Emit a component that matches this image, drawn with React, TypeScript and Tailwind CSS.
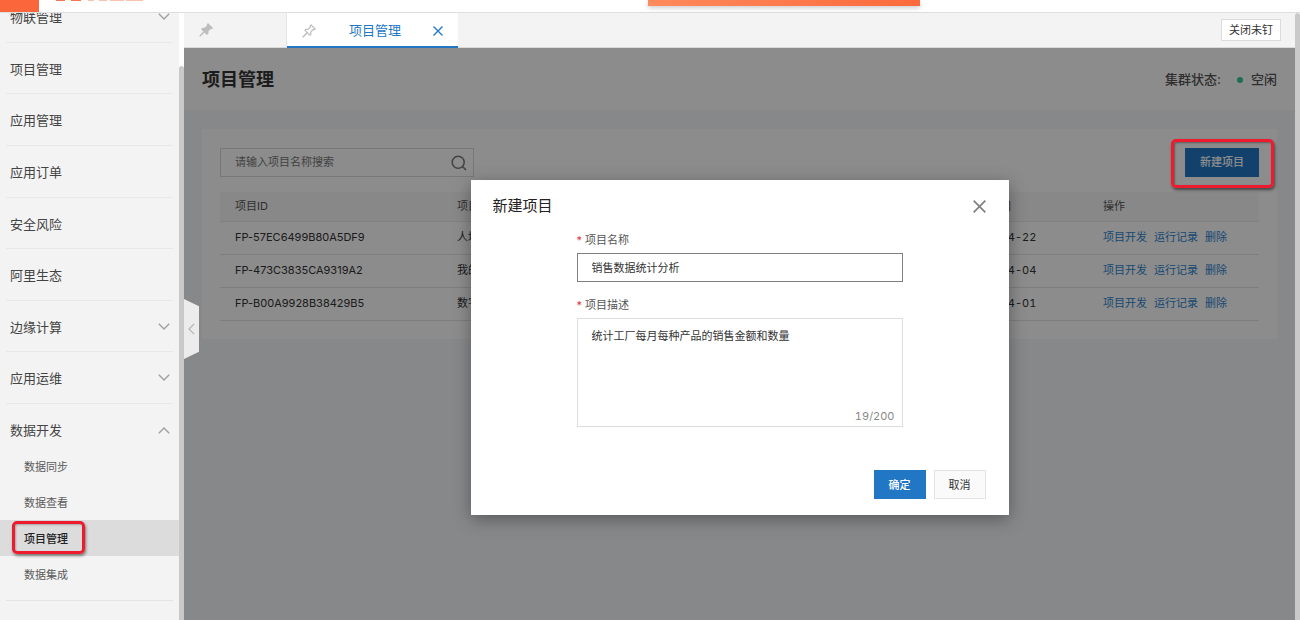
import { useState } from 'react';

type NavItem = { label: string; expandable?: boolean };

const navItems: NavItem[] = [
  { label: '物联管理', expandable: true },
  { label: '项目管理' },
  { label: '应用管理' },
  { label: '应用订单' },
  { label: '安全风险' },
  { label: '阿里生态' },
  { label: '边缘计算', expandable: true },
  { label: '应用运维', expandable: true },
];

const subItems = ['数据同步', '数据查看', '项目管理', '数据集成'];

const projects = [
  { id: 'FP-57EC6499B80A5DF9', name: '人均产值', date: '2021-04-22' },
  { id: 'FP-473C3835CA9319A2', name: '我的项目', date: '2021-04-04' },
  { id: 'FP-B00A9928B38429B5', name: '数字工厂', date: '2021-04-01' },
];

function Chevron({ up = false }: { up?: boolean }) {
  return (
    <svg width="12" height="7" viewBox="0 0 12 7" fill="none" stroke="#a0a0a0" strokeWidth="1.4" aria-hidden="true">
      <path d={up ? 'M0.8 6.2 6 1l5.2 5.2' : 'M0.8 0.8 6 6l5.2-5.2'} />
    </svg>
  );
}

function Cross({ size, className }: { size: number; className: string }) {
  return (
    <svg width={size} height={size} viewBox="0 0 12 12" fill="none" stroke="currentColor" strokeWidth="1.6" className={className} aria-hidden="true">
      <path d="M0.6 0.6 11.4 11.4M11.4 0.6 0.6 11.4" />
    </svg>
  );
}

function Pin({ filled = false }: { filled?: boolean }) {
  return (
    <svg width="14" height="14" viewBox="0 0 14 14" fill={filled ? '#bdbdbd' : 'none'} stroke="#bdbdbd" strokeWidth="1.2" strokeLinejoin="round" aria-hidden="true">
      <path d="M9 0.8 13.2 5 12 5.8 11.2 5.5 8.9 7.9 8.8 10.6 7.8 11.2 2.9 6.3 3.6 5.3 6.2 5.1 8.5 2.8 8.2 2Z" />
      <path d="M5.2 8.8 0.7 13.3" strokeWidth="1.5" />
    </svg>
  );
}

function Header() {
  return (
    <header className="flex h-[13px] shrink-0 items-start border-b border-[#dedede] bg-white">
      <div className="h-3 w-[39px] bg-[#fb673b]" />
      <svg width="90" height="2" viewBox="0 0 90 2" className="ml-4" aria-hidden="true">
        <path d="M1 0h9v1h-9zM16 0h10v1h-10z" fill="#f97650" />
        <path d="M33 0h6v1h-6zM44 0h8v1h-8zM55 0h14v1h-14zM71 0h17v1h-17z" fill="#f9c3ae" />
      </svg>
      <div className="mr-[380px] ml-auto h-[6px] w-[272px] bg-linear-to-r from-[#ff8a5c] to-[#fb6a3c] shadow-[0_2px_5px_rgba(0,0,0,0.2)]" />
    </header>
  );
}

function Sidebar() {
  return (
    <aside className="flex w-[184px] shrink-0 overflow-hidden bg-[#f3f3f3]">
      <nav className="min-w-0 flex-1">
        <ul className="-mt-[22px] grid h-[413px] auto-rows-fr">
          {navItems.map((item) => (
            <li key={item.label} className="mx-[6px] border-b border-[#e8e8e8]">
              <a href="#" className="flex justify-between pt-4 pr-[3px] pl-1 text-[13px] leading-5 text-[#444]">
                {item.label}
                {item.expandable && (
                  <span className="pt-[6px]">
                    <Chevron />
                  </span>
                )}
              </a>
            </li>
          ))}
        </ul>
        <button type="button" className="flex h-11 w-full justify-between pt-4 pr-[9px] pl-[10px] text-[13px] leading-5 text-[#444]">
          数据开发
          <span className="pt-[7px]">
            <Chevron up />
          </span>
        </button>
        <ul>
          {subItems.map((label) =>
            label === '项目管理' ? (
              <li key={label} className="relative bg-[#dcdcdc]">
                <a href="#" className="flex h-9 items-center pt-[3px] pl-6 text-[11px] font-medium text-[#222]">
                  {label}
                </a>
                <span className="pointer-events-none absolute top-px left-3 h-[33px] w-[73px] rounded-[5px] border-3 border-[#ee1b2e] shadow-[1px_2px_3px_rgba(0,0,0,0.45),inset_1px_1px_2px_rgba(0,0,0,0.25)]" />
              </li>
            ) : (
              <li key={label}>
                <a href="#" className="flex h-9 items-center pt-[3px] pl-6 text-[11px] text-[#5a5a5a]">
                  {label}
                </a>
              </li>
            ),
          )}
        </ul>
        <div className="mx-[6px] mt-2 border-t border-[#e4e4e4]" />
      </nav>
      <div className="w-[5px] bg-white pt-[53px]">
        <div className="h-full rounded-t-sm bg-[#c9c9c9]" />
      </div>
    </aside>
  );
}

function TabBar() {
  return (
    <div className="flex h-[35px] shrink-0 border-b border-[#d8dad8] bg-[#f3f3f3]">
      <div className="flex w-[103px] items-center border-r border-[#e6e6e6] pl-[15px]">
        <Pin filled />
      </div>
      <div className="-mb-px flex w-[171px] items-center border-b-2 border-[#2277c5] bg-white pt-[2px] pr-[15px] pl-[15px] text-[13px] text-[#2277c5]">
        <Pin />
        <a href="#" className="ml-auto">
          项目管理
        </a>
        <button type="button" aria-label="关闭标签" className="ml-8">
          <Cross size={10} className="text-[#2277c5]" />
        </button>
      </div>
      <button type="button" className="mt-[6px] mr-[14px] ml-auto h-[22px] border border-[#dcdcdc] bg-white px-[7px] text-[11px] text-[#333]">
        关闭未钉
      </button>
    </div>
  );
}

function ProjectTable() {
  return (
    <table className="mt-[15px] w-full table-fixed text-left text-[11px] text-[#333]">
      <colgroup>
        <col className="w-[222px]" />
        <col />
        <col className="w-[136px]" />
        <col className="w-[171px]" />
      </colgroup>
      <thead>
        <tr className="h-[29px] border-b border-[#e9e9e9] bg-[#f8f8f8] text-[#555]">
          <th className="pl-[15px] font-normal">项目ID</th>
          <th className="pl-[15px] font-normal">项目名称</th>
          <th className="pl-[15px] font-normal">创建时间</th>
          <th className="pl-[15px] font-normal">操作</th>
        </tr>
      </thead>
      <tbody>
        {projects.map((p) => (
          <tr key={p.id} className="h-[33px] border-b border-[#e6e6e6]">
            <td className="pl-[15px]">{p.id}</td>
            <td className="pl-[15px]">{p.name}</td>
            <td className="pl-[13px] tabular-nums">{p.date}</td>
            <td className="pl-[15px]">
              <div className="flex gap-[7px] whitespace-nowrap text-[#2e86cf]">
                <a href="#">项目开发</a>
                <a href="#">运行记录</a>
                <a href="#">删除</a>
              </div>
            </td>
          </tr>
        ))}
      </tbody>
    </table>
  );
}

function ProjectPage() {
  return (
    <div className="h-full bg-[#f5f7fa]">
      <div className="flex h-[62px] items-center justify-between bg-white px-[18px] pt-[2px]">
        <h1 className="text-lg font-bold text-[#333]">项目管理</h1>
        <div className="flex items-center text-[13px] text-[#555]">
          <span className="font-medium">集群状态:</span>
          <span className="mr-2 ml-4 size-[6px] rounded-full bg-[#35c88d]" />
          <span className="font-medium">空闲</span>
        </div>
      </div>
      <section className="mx-[18px] mt-[19px] bg-white p-[18px] pt-[19px]">
        <div className="flex items-start justify-between">
          <label className="flex h-[29px] w-[254px] items-center border border-[#dadada] pr-[6px] pl-[14px]">
            <input
              aria-label="搜索项目"
              placeholder="请输入项目名称搜索"
              className="min-w-0 flex-1 bg-transparent text-[11px] outline-none placeholder:text-[#777]"
            />
            <svg width="16" height="16" viewBox="0 0 16 16" fill="none" stroke="#7a7a7a" strokeWidth="1.5" aria-hidden="true">
              <circle cx="7.2" cy="7.2" r="6" />
              <path d="M11.4 11.4 15 15" />
            </svg>
          </label>
          <div className="relative">
            <button type="button" className="h-[29px] w-[74px] bg-[#2277c5] text-[11px] font-medium text-white">
              新建项目
            </button>
            <span className="pointer-events-none absolute -top-[9px] -right-[15px] -bottom-[11px] -left-[14px] z-20 rounded-[5px] border-3 border-[#ee1b2e] shadow-[1px_2px_3px_rgba(0,0,0,0.5),inset_1px_1px_2px_rgba(0,0,0,0.35)]" />
          </div>
        </div>
        <ProjectTable />
      </section>
    </div>
  );
}

function CreateDialog() {
  const [name, setName] = useState('销售数据统计分析');
  const [desc, setDesc] = useState('统计工厂每月每种产品的销售金额和数量');
  return (
    <div className="absolute inset-0 z-10 flex items-start justify-center bg-black/45 pt-[132px]">
      <div role="dialog" aria-labelledby="dialog-title" className="w-[538px] bg-white pt-[14px] pb-4 shadow-[0_4px_16px_rgba(0,0,0,0.35)]">
        <div className="flex h-6 items-center justify-between pr-[23px] pl-[22px]">
          <h2 id="dialog-title" className="text-[15px] text-[#222]">
            新建项目
          </h2>
          <button type="button" aria-label="关闭">
            <Cross size={13} className="text-[#808080]" />
          </button>
        </div>
        <form className="mt-3 px-[106px] text-[11px] text-[#333]">
          <label htmlFor="name" className="mb-[3px] block leading-5 text-[#555]">
            <span className="mr-[3px] text-[#d9363e]">*</span>
            项目名称
          </label>
          <input
            id="name"
            value={name}
            onChange={(e) => setName(e.target.value)}
            className="block h-[29px] w-full border border-[#808080] px-[14px] pb-[2px] outline-none"
          />
          <label htmlFor="desc" className="mt-[13px] mb-[3px] block leading-5 text-[#555]">
            <span className="mr-[3px] text-[#d9363e]">*</span>
            项目描述
          </label>
          <div className="flex h-[109px] flex-col border border-[#dcdcdc]">
            <textarea
              id="desc"
              value={desc}
              onChange={(e) => setDesc(e.target.value)}
              className="block w-full flex-1 resize-none px-[14px] pt-2 leading-[18px] outline-none"
            />
            <span className="pr-[7px] text-right leading-5 text-[#888] tabular-nums">19/200</span>
          </div>
        </form>
        <div className="mt-[43px] flex justify-end gap-2 pr-[23px] text-[11px]">
          <button type="button" className="h-[29px] w-[52px] bg-[#2277c5] pt-px font-medium text-white">
            确定
          </button>
          <button type="button" className="h-[29px] w-[52px] border border-[#e3e3e3] bg-[#fafafa] pt-px text-[#333]">
            取消
          </button>
        </div>
      </div>
    </div>
  );
}

export default function App() {
  return (
    <div className="flex h-screen flex-col overflow-hidden font-['Inter','Noto_Sans_CJK_SC',sans-serif]">
      <Header />
      <div className="flex min-h-0 flex-1">
        <Sidebar />
        <main className="flex min-w-0 flex-1 flex-col">
          <TabBar />
          <div className="relative min-h-0 flex-1">
            <ProjectPage />
            <CreateDialog />
            <button
              type="button"
              aria-label="收起菜单"
              className="absolute top-[251px] left-0 z-20 flex h-[60px] w-[15px] items-center justify-center bg-[#ececec] [clip-path:polygon(0_0,100%_12%,100%_88%,0_100%)]"
            >
              <svg width="7" height="12" viewBox="0 0 7 12" fill="none" stroke="#b5b5b5" strokeWidth="1.2" aria-hidden="true">
                <path d="M6.2 0.8 1 6l5.2 5.2" />
              </svg>
            </button>
          </div>
        </main>
        <div className="w-[5px] shrink-0 rounded-t-sm bg-[#c9c9c9]" />
      </div>
    </div>
  );
}
